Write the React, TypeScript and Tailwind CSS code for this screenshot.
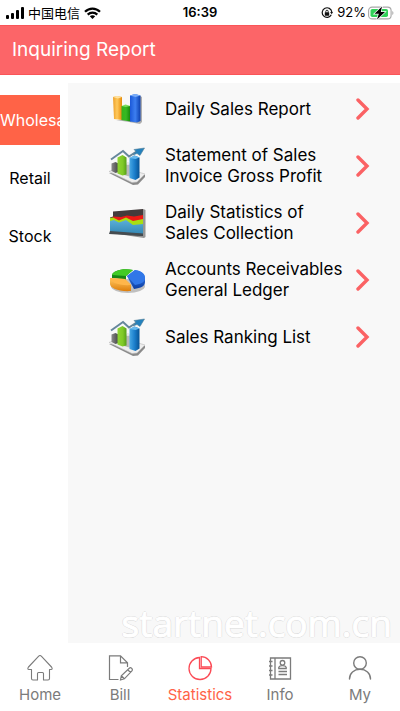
import React from "react";

type IconProps = { className?: string };

const SignalIcon = () => (
  <svg viewBox="0 0 18 12" className="h-3 w-[18px]" fill="#000" aria-hidden="true">
    <rect x="0" y="8" width="3" height="4" rx="1" />
    <rect x="5" y="6" width="3" height="6" rx="1" />
    <rect x="10" y="3" width="3" height="9" rx="1" />
    <rect x="15" y="0" width="3" height="12" rx="1" />
  </svg>
);

const WifiIcon = () => (
  <svg viewBox="0 0 17 12" className="h-3 w-[17px]" aria-hidden="true">
    <g fill="none" stroke="#000" strokeWidth="2.2">
      <path d="M1 4.8C5.2 .5 11.8 .5 16 4.8" />
      <path d="M3.7 7.6C6.4 4.9 10.6 4.9 13.3 7.6" />
    </g>
    <path d="M5.8 9.2C7.3 7.8 9.7 7.8 11.2 9.2L8.5 12Z" fill="#000" />
  </svg>
);

const RotationLockIcon = () => (
  <svg viewBox="0 0 12 12" className="h-3 w-3" aria-hidden="true">
    <path d="M10.3 7.8A4.8 4.8 0 1 1 10.8 5" fill="none" stroke="#111" strokeWidth="1.2" />
    <path d="M9.1 5H12L10.7 7.3Z" fill="#111" />
    <rect x="3.8" y="5.3" width="4.4" height="3.4" rx=".4" fill="#111" />
    <path d="M4.8 5.5V4.4a1.2 1.2 0 0 1 2.4 0v1.1" fill="none" stroke="#111" strokeWidth=".9" />
  </svg>
);

const BatteryIcon = () => (
  <svg viewBox="0 0 26 14" className="h-3.5 w-[26px]" aria-hidden="true">
    <rect x=".6" y="1.1" width="22.5" height="11.8" rx="3.5" fill="#fff" stroke="#a8a8a8" strokeWidth="1.1" />
    <rect x="2.5" y="3" width="17.5" height="8" rx="1.8" fill="#30d158" />
    <path d="M24.3 5v4c1.5-.5 1.5-3.5 0-4z" fill="#a8a8a8" />
    <path d="M14 .5 6.5 7.8h4.3L9 13.5l8-7.6h-4.2z" fill="#000" stroke="#fff" strokeWidth="1.4" paintOrder="stroke" />
  </svg>
);

const BarsIcon = () => (
  <svg viewBox="0 0 40 40" className="size-10" aria-hidden="true">
    <defs>
      <linearGradient id="bars-y"><stop stopColor="#eda02a" /><stop offset=".45" stopColor="#ffc95c" /><stop offset="1" stopColor="#e58a08" /></linearGradient>
      <linearGradient id="bars-g"><stop stopColor="#35b31e" /><stop offset=".5" stopColor="#37b922" /><stop offset="1" stopColor="#14850c" /></linearGradient>
      <linearGradient id="bars-b"><stop stopColor="#1b58d8" /><stop offset=".5" stopColor="#3d7ff0" /><stop offset="1" stopColor="#0c3fae" /></linearGradient>
    </defs>
    <path d="M9 31 22 33l11 2 2-2V8l-2-1v24z" fill="#555" opacity=".45" />
    <path d="M6 8l4-1 5 1v23l-8-1z" fill="url(#bars-y)" />
    <path d="M6 8l4-1 5 1-4 1.5z" fill="#ffe2a0" />
    <path d="M14.5 17h9v15.5l-9-1.5z" fill="url(#bars-g)" />
    <path d="M14.5 17l4-1.5 5 1.5-5 1z" fill="#7bdc5e" />
    <path d="M23 6.5l5-1.5 5.5 1.5v25.500l-3.500 1.500-7-1z" fill="url(#bars-b)" />
    <path d="M23 6.5l5-1.5 5.5 1.5-5 1.5z" fill="#79acf7" />
  </svg>
);

const TrendBarsIcon = () => (
  <svg viewBox="0 0 40 40" className="size-10" aria-hidden="true">
    <defs>
      <linearGradient id="trend-b"><stop stopColor="#48a8e4" /><stop offset=".5" stopColor="#1c7fcc" /><stop offset="1" stopColor="#075395" /></linearGradient>
      <linearGradient id="trend-g"><stop stopColor="#8fd632" /><stop offset=".6" stopColor="#7fc927" /><stop offset="1" stopColor="#559f18" /></linearGradient>
      <linearGradient id="trend-k"><stop stopColor="#898989" /><stop offset="1" stopColor="#444" /></linearGradient>
    </defs>
    <path d="M2 27 26 39l5-.5L38 31v-2z" fill="#666" opacity=".75" />
    <path d="M2 25.5 14 21l24 7-8 8-5 .5z" fill="#eee" stroke="#bbb" strokeWidth=".6" />
    <path d="M4.5 17.5l4-1.5 3 1.5v8.5l-3 1-4-2z" fill="url(#trend-k)" />
    <path d="M17 18l4-1.5 3 1.5v13l-7-2z" fill="#b8b8b8" />
    <path d="M17 18l4-1.5 3 1.5-3 1z" fill="#e8e8e8" />
    <path d="M10.5 11.5l5-2.5 4 2.5v17l-4 1-5-2z" fill="url(#trend-g)" />
    <path d="M22.5 12l5-2.5 5 2v20l-4 2.5-6-2z" fill="url(#trend-b)" />
    <path d="M22.5 12l5-2.5 5 2-4 1.5z" fill="#67b9ed" />
    <path d="M4 13.5 16 5l6 5.5 9-6" fill="none" stroke="#66879c" strokeWidth="2" />
    <path d="M27 3.5 37.5 2 33 9.500l-3-2-4 1.500 3-3.500z" fill="#2381bd" stroke="#547d95" strokeWidth=".6" />
  </svg>
);

const AreaIcon = () => (
  <svg viewBox="0 0 40 40" className="size-10" aria-hidden="true">
    <defs>
      <linearGradient id="area-b" x2="0" y2="1"><stop stopColor="#5aafd8" /><stop offset="1" stopColor="#3488b5" /></linearGradient>
    </defs>
    <path d="M4 30 37 35l1.500-1V7l-2-1z" fill="#333" opacity=".5" />
    <path d="M6 8.5 36 6v27L3 30V14.5l3-1z" fill="#443b3b" />
    <path d="M6 13.5l8 .5 6-1.500 7 1L36 12v12H6z" fill="#ed1914" />
    <path d="M3 15l3-.5 6 3 7-3 7 3.500 10-2v10H3z" fill="#a9df12" />
    <path d="M3 18l4-1 5 2.500 7-2.500 7 5 10-1v10L3 29z" fill="url(#area-b)" />
    <path d="M3 28l33 2.500V33L2 31z" fill="#454c50" />
  </svg>
);

const PieIcon = () => (
  <svg viewBox="0 0 40 40" className="size-10" aria-hidden="true">
    <defs>
      <linearGradient id="pie-y" x2="0" y2="1"><stop stopColor="#ffc965" /><stop offset="1" stopColor="#df7e0a" /></linearGradient>
      <linearGradient id="pie-b" x2="0" y2="1"><stop stopColor="#4287f1" /><stop offset="1" stopColor="#0b3da4" /></linearGradient>
    </defs>
    <ellipse cx="21" cy="26" rx="17" ry="7" fill="#555" opacity=".35" />
    <path d="M20 16 28 10c7 1 10 4 10 9v3c0 4-4 6-11 7z" fill="url(#pie-b)" />
    <path d="M20 16 28 10c7 1 10 4 10 8s-4 6-10 7z" fill="#3177e8" />
    <path d="M5 15c1-4 10-7 21-5l-7 6v4L5 18z" fill="#168715" />
    <path d="M5 15c1-4 10-7 21-5l-7 6z" fill="#42cb25" />
    <path d="M3 18l15 1 6 6v6c-12 1-21-3-21-7z" fill="url(#pie-y)" />
    <path d="M3 18l15 1 6 6c-12 1-21-3-21-7z" fill="#ffb64a" />
  </svg>
);

const ChevronIcon = () => (
  <svg viewBox="0 0 14 22" className="h-[22px] w-3.5" fill="none" stroke="#fb6264" strokeWidth="3.4" aria-hidden="true">
    <path d="M2 2l9 9-9 9" strokeLinecap="round" strokeLinejoin="miter" />
  </svg>
);

const HomeIcon = ({ className }: IconProps) => (
  <svg viewBox="0 0 26 26" className={className} fill="none" stroke="currentColor" strokeWidth="1.1" strokeLinejoin="round" aria-hidden="true">
    <path d="M11.7 1.1Q13 0 14.3 1.1L24.5 12Q26 14.5 24 14.5H22.5V23.5Q22.5 25 21 25H16.5V18.5Q16.5 17.5 15.5 17.5H11.5Q10.5 17.5 10.5 18.5V25H6Q4.5 25 4.5 23.5V14.5H2Q0 14.5 1.5 12Z" />
  </svg>
);

const BillIcon = ({ className }: IconProps) => (
  <svg viewBox="0 0 26 26" className={className} fill="none" stroke="currentColor" strokeWidth="1.2" aria-hidden="true">
    <path d="M11.5 24.5H2.5V.8H13.5L20.5 7.8V12M13.5 .8V7.8H20.5" />
    <path d="M13.5 25l.8-4.2 8-7.6q1.2-1 2.4.2t.2 2.4l-7.5 8zM14.3 20.8l3.1 3M20.7 14.7l2.9 2.8" />
  </svg>
);

const StatisticsIcon = ({ className }: IconProps) => (
  <svg viewBox="0 0 26 26" className={className} fill="none" stroke="#fb4b56" strokeWidth="1.3" aria-hidden="true">
    <path d="M12.500 2.500A11 11 0 1 0 24 13.500H12.500Z" />
    <path d="M14.200 1.700A10.500 10.500 0 0 1 24.500 12H14.200Z" />
  </svg>
);

const InfoIcon = ({ className }: IconProps) => (
  <svg viewBox="0 0 26 26" className={className} fill="none" stroke="currentColor" strokeWidth="1.3" aria-hidden="true">
    <path d="M3.5 3H23.5V24H3.5ZM8 3V24" />
    <path d="M2 6.5H5.5M2 11H5.5M2 15.5H5.5M2 20H5.5" strokeWidth="1.6" />
    <circle cx="15.5" cy="7.8" r="2.3" />
    <path d="M11.8 13.5V12.3Q12.5 10.7 15.5 10.7T19.2 12.3V13.5ZM11.5 16.5H20M11.5 19.5H20" />
  </svg>
);

const UserIcon = ({ className }: IconProps) => (
  <svg viewBox="0 0 26 26" className={className} fill="none" stroke="currentColor" strokeWidth="1.4" strokeLinecap="round" aria-hidden="true">
    <circle cx="13" cy="8" r="6.3" />
    <path d="M2.5 24C2.5 18 7 14.3 13 14.3S23.5 18 23.5 24" />
  </svg>
);

const categories = ["Wholesale", "Retail", "Stock"];

const reports = [
  { title: "Daily Sales Report", icon: BarsIcon },
  { title: "Statement of Sales Invoice Gross Profit", icon: TrendBarsIcon },
  { title: "Daily Statistics of Sales Collection", icon: AreaIcon },
  { title: "Accounts Receivables General Ledger", icon: PieIcon },
  { title: "Sales Ranking List", icon: TrendBarsIcon },
];

const tabs = [
  { label: "Home", icon: HomeIcon },
  { label: "Bill", icon: BillIcon },
  { label: "Statistics", icon: StatisticsIcon },
  { label: "Info", icon: InfoIcon },
  { label: "My", icon: UserIcon },
];

const StatusBar = () => (
  <div className="grid h-[25px] grid-cols-3 items-center px-1.5 text-black">
    <div className="flex items-center gap-1">
      <SignalIcon />
      <span className="whitespace-nowrap text-[13px] leading-4">中国电信</span>
      <WifiIcon />
    </div>
    <span className="text-center text-[13px] font-semibold">16:39</span>
    <div className="flex items-center justify-end gap-1">
      <RotationLockIcon />
      <div className="flex items-center gap-0.5">
        <span className="text-[13px]">92%</span>
        <BatteryIcon />
      </div>
    </div>
  </div>
);

const App = () => {
  const [category, setCategory] = React.useState("Wholesale");
  const [tab, setTab] = React.useState("Statistics");

  return (
    <div className="flex min-h-screen flex-col bg-white font-['Inter','Noto_Sans_CJK_SC',sans-serif]">
      <StatusBar />
      <header className="flex h-[50px] items-center border-y border-[#fa5558] bg-[#fc6568] px-3">
        <h1 className="text-[19px] text-white">Inquiring Report</h1>
      </header>

      <div className="flex flex-1 pt-2">
        <aside className="flex w-[68px] shrink-0 flex-col gap-2 pt-3">
          {categories.map((name) => (
            <button
              key={name}
              type="button"
              onClick={() => setCategory(name)}
              className={`h-[50px] w-[60px] overflow-hidden whitespace-nowrap text-base ${
                name === category ? "bg-[#ff6347] text-left text-white" : "text-center text-black"
              }`}
            >
              {name}
            </button>
          ))}
        </aside>

        <main className="relative flex-1 bg-[#f8f8f8]">
          <ul className="flex flex-col gap-[7px] pt-px">
            {reports.map(({ title, icon: Icon }) => (
              <li key={title}>
                <button type="button" className="flex h-[50px] w-full items-center justify-between pr-[30px] pl-[39px] text-left">
                  <span className="flex items-center gap-[18px]">
                    <Icon />
                    <span className="w-[180px] text-[17px] leading-[21px] text-black">{title}</span>
                  </span>
                  <ChevronIcon />
                </button>
              </li>
            ))}
          </ul>
          <p className="absolute right-2 bottom-0 font-['Open_Sans',sans-serif] text-[37px] leading-10 text-white [-webkit-text-stroke:1px_#fff] [text-shadow:1px_0_#dadada,-1px_0_#dadada,0_1px_#dadada,0_-1px_#dadada]">
            startnet.com.cn
          </p>
        </main>
      </div>

      <nav className="grid h-[68px] grid-cols-5">
        {tabs.map(({ label, icon: Icon }) => (
          <button
            key={label}
            type="button"
            onClick={() => setTab(label)}
            className={`flex flex-col items-center pt-3 text-[15px] ${label === tab ? "text-[#ff6347]" : "text-[#7b7b7b]"}`}
          >
            <Icon className="size-[26px]" />
            <span className="mt-1 leading-5">{label}</span>
          </button>
        ))}
      </nav>
    </div>
  );
};

export default App;
